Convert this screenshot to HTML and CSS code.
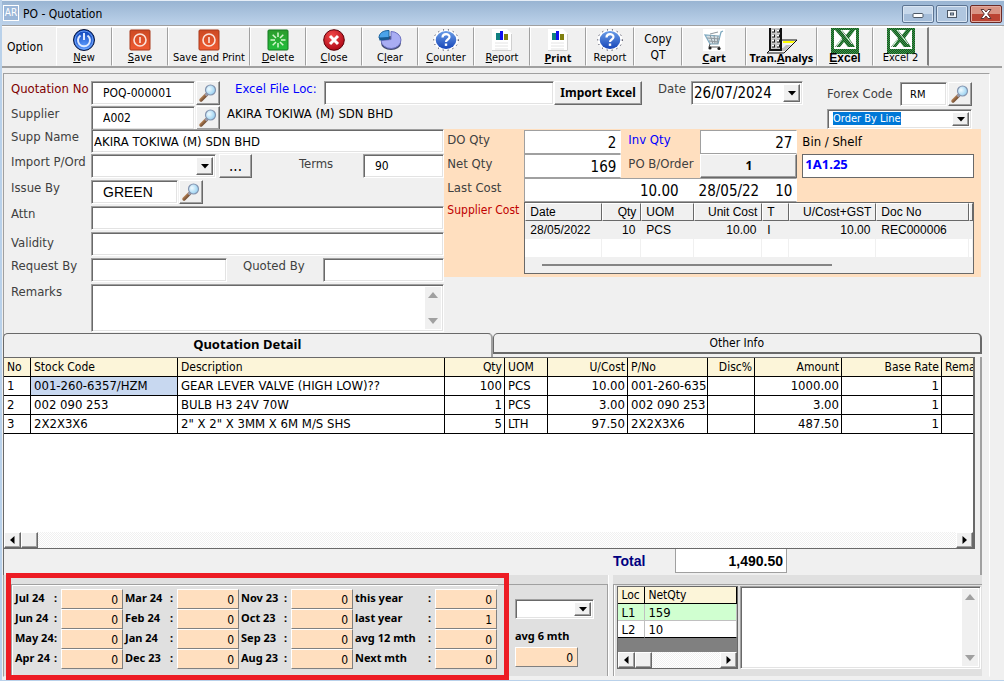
FILE: index.html
```html
<!DOCTYPE html>
<html lang="en">
<head>
<meta charset="utf-8">
<title>PO - Quotation</title>
<link rel="stylesheet" href="styles.css">
</head>
<body>
<svg class="sprite" aria-hidden="true">
  <defs>
    <linearGradient id="handle" x1="0" y1="0" x2="1" y2="1"><stop offset="0" stop-color="#e2a56c"/><stop offset="1" stop-color="#43281a"/></linearGradient>
    <radialGradient id="lens" cx=".35" cy=".4" r=".7"><stop offset="0" stop-color="#f2fbff"/><stop offset="1" stop-color="#8fcdf0"/></radialGradient>
    <radialGradient id="blue" cx=".5" cy=".8" r=".8"><stop offset="0" stop-color="#5c9bff"/><stop offset="1" stop-color="#0a3fb4"/></radialGradient>
    <linearGradient id="orange" x1="0" y1="0" x2="0" y2="1"><stop offset="0" stop-color="#cc4a24"/><stop offset="1" stop-color="#f05a32"/></linearGradient>
    <linearGradient id="green" x1="0" y1="0" x2="0" y2="1"><stop offset="0" stop-color="#2c9a2c"/><stop offset="1" stop-color="#22c03c"/></linearGradient>
    <radialGradient id="red" cx=".4" cy=".3" r=".8"><stop offset="0" stop-color="#f24a4a"/><stop offset="1" stop-color="#a80010"/></radialGradient>
    <linearGradient id="help" x1="0" y1="0" x2="0" y2="1"><stop offset="0" stop-color="#6a9de8"/><stop offset="1" stop-color="#1746b8"/></linearGradient>
    <pattern id="weave" width="2" height="2" patternUnits="userSpaceOnUse"><rect width="2" height="2" fill="#35a045"/><rect width="1" height="1" fill="#1c4a24"/><rect x="1" y="1" width="1" height="1" fill="#1c4a24"/></pattern>
  </defs>
  <symbol id="i-find" viewBox="0 0 20 20">
    <path d="M8.500 11.500L3 17" stroke="url(#handle)" stroke-width="3.500" stroke-linecap="round"/>
    <path d="M9.500 10.500L7.500 12.500" stroke="#9a9aa8" stroke-width="3"/>
    <circle cx="12.500" cy="7" r="5" fill="url(#lens)" stroke="#8595b0" stroke-width="1.200"/>
  </symbol>
  <symbol id="i-power" viewBox="0 0 22 22">
    <circle cx="11" cy="11" r="10.500" fill="url(#blue)" stroke="#08163c"/>
    <circle cx="11" cy="11" r="9" fill="none" stroke="#7fb0ff" stroke-width=".8"/>
    <path d="M7.500 6.500a6 6 0 1 0 7 0M11 4v7" fill="none" stroke="#dfeaff" stroke-width="2"/>
  </symbol>
  <symbol id="i-save" viewBox="0 0 22 22">
    <rect x="1" y="1" width="20" height="20" rx="1" fill="url(#orange)" stroke="#a93a1c"/>
    <circle cx="11" cy="11" r="6" fill="none" stroke="#fbe4dc" stroke-width="1.600"/>
    <path d="M11 8v6" stroke="#fbe4dc" stroke-width="1.600"/>
  </symbol>
  <symbol id="i-delete" viewBox="0 0 22 22">
    <rect x="1" y="1" width="20" height="20" rx="1" fill="url(#green)" stroke="#147a22"/>
    <path d="M11 3.500v4.500M11 14v4.500M3.500 11H8M14 11h4.500M5.700 5.700L9 9M13 13l3.300 3.300M5.700 16.300L9 13M13 9l3.300-3.300" stroke="#d6f7cf" stroke-width="1.500"/>
  </symbol>
  <symbol id="i-close" viewBox="0 0 22 22">
    <circle cx="11" cy="11" r="10.300" fill="url(#red)" stroke="#5d0008"/>
    <path d="M7 7l8 8M15 7l-8 8" stroke="#fff" stroke-width="3"/>
  </symbol>
  <symbol id="i-pie" viewBox="0 0 24 22">
    <ellipse cx="13" cy="14" rx="10" ry="7" fill="#40486e"/>
    <path d="M13 2.500a10 8.500 0 1 1-10 9l10-1z" fill="#a9adf3" stroke="#6b70c0"/>
    <path d="M1 9C1 4 5 1.500 11 1.500v7z" fill="#4aa3ea" stroke="#17609c"/>
    <path d="M1 9l10-.5v2L1.500 11.500z" fill="#155a92"/>
  </symbol>
  <symbol id="i-help" viewBox="0 0 26 22">
    <ellipse cx="13" cy="11" rx="12.300" ry="10.300" fill="#fff" stroke="#11112a" stroke-dasharray="1 4"/>
    <ellipse cx="13" cy="11" rx="10.300" ry="9" fill="url(#help)"/>
    <path d="M9.500 8.500C9.500 4 16.500 4 16.500 8c0 2.500-3.500 2.500-3.500 5" fill="none" stroke="#fff" stroke-width="2.200"/>
    <rect x="11.800" y="14.500" width="2.400" height="2.400" fill="#fff"/>
  </symbol>
  <symbol id="i-chart" viewBox="0 0 20 22">
    <path d="M0 0h15l5 5v17H0z" fill="#fff"/>
    <path d="M19.500 5v16.500H0" fill="none" stroke="#d0d0d0"/>
    <rect x="4" y="4" width="4" height="7" fill="#108080"/><rect x="8" y="2" width="3" height="9" fill="#1010f0"/><rect x="12" y="5" width="4" height="6" fill="#808010"/>
    <path d="M3 14h13M3 17h13M3 20h13" stroke="#e4e4e4"/>
  </symbol>
  <symbol id="i-cart" viewBox="0 0 22 22">
    <rect width="22" height="22" fill="#fff"/>
    <path d="M20 2l-2 1-3 12H7L2 6l14 1" fill="#d5e0e6" stroke="#7da9c0" stroke-width="1.200"/>
    <path d="M4 9l13 1M6 12l10 1M7 6l3 9M11 6l1 9M15 7l-1 8M7 5l8-2" stroke="#8f989e" stroke-width="1"/>
    <path d="M7 15l-1 3h11" fill="none" stroke="#555"/><circle cx="7" cy="19" r="1.600" fill="#222"/><circle cx="16" cy="19.500" r="1.600" fill="#222"/>
  </symbol>
  <symbol id="i-tower" viewBox="0 0 32 26">
    <path d="M14 12h17L18 25H1z" fill="#f2f2f2" stroke="#111"/>
    <path d="M17 13h12l-2 2H17z" fill="#ff0"/>
    <path d="M20 17h5l-6 6H6l3-3h8z" fill="#bcbcbc"/>
    <path d="M3 0h13v23H3z" fill="#111"/>
    <path d="M5 0h9v21H5z" fill="#c8c8c8"/>
    <path d="M6 3h3M11 3h3M6 8h3M11 8h3M6 13h3M11 13h3M6 18h3M11 18h3" stroke="#111" stroke-width="3"/>
    <path d="M6 2.500h2M11 2.500h2M6 7.500h2M11 7.500h2M6 12.500h2M11 12.500h2M6 17.500h2M11 17.500h2" stroke="#fff" stroke-width="2"/>
  </symbol>
  <symbol id="i-excel" viewBox="0 0 28 26">
    <rect width="28" height="26" fill="url(#weave)"/>
    <path d="M3 2h22v19H3z" fill="#fff"/>
    <path d="M4 2h7l4 5 4-5h5l-6 8 6 9h-7l-4-5-4 5H4l7-9z" fill="url(#weave)"/>
    <path d="M10 2l11 14M5 19l6-8" stroke="#fff" stroke-width="1"/>
  </symbol>
  <symbol id="i-down" viewBox="0 0 8 5"><path d="M0 0h8L4 4.500z"/></symbol>
  <symbol id="i-up" viewBox="0 0 10 6"><path d="M0 6h10L5 0z"/></symbol>
  <symbol id="i-flip" viewBox="0 0 10 6"><path d="M0 0h10L5 6z"/></symbol>
  <symbol id="i-left" viewBox="0 0 5 8"><path d="M4.500 0v8L0 4z"/></symbol>
  <symbol id="i-right" viewBox="0 0 5 8"><path d="M.5 0v8L5 4z"/></symbol>
</svg>

<div class="window">
  <header class="titlebar">
    <span class="app-icon" aria-hidden="true">AR</span>
    <h1>PO - Quotation</h1>
    <button class="win-btn" aria-label="Minimize"><svg width="12" height="12" viewBox="0 0 12 12"><rect x="1" y="5.500" width="10" height="4" rx="1" fill="#fff" stroke="#4d5866"/></svg></button>
    <button class="win-btn win-max" aria-label="Maximize"><svg width="12" height="12" viewBox="0 0 12 12"><rect x="1.500" y="2.500" width="9" height="7" fill="#f4f6f9" stroke="#4d5866"/><rect x="4.500" y="5" width="3" height="2" fill="#a9bdd6" stroke="#4d5866"/></svg></button>
    <button class="win-btn win-close" aria-label="Close window"><svg width="14" height="12" viewBox="0 0 14 12"><path d="M2 1.500h3l2 2.500 2-2.500h3L8.700 6l3.300 4.500H9L7 8l-2 2.500H2L5.300 6z" fill="#fff" stroke="#5a3434"/></svg></button>
  </header>

  <nav class="toolbar">
    <span class="tool-title">Option</span>
    <button class="tool"><svg width="22" height="22"><use href="#i-power"/></svg><span><u>N</u>ew</span></button>
    <button class="tool"><svg width="22" height="22"><use href="#i-save"/></svg><span><u>S</u>ave</span></button>
    <button class="tool tool-xl"><svg width="22" height="22"><use href="#i-save"/></svg><span>Save <u>a</u>nd Print</span></button>
    <button class="tool"><svg width="22" height="22"><use href="#i-delete"/></svg><span><u>D</u>elete</span></button>
    <button class="tool"><svg width="22" height="22"><use href="#i-close"/></svg><span><u>C</u>lose</span></button>
    <button class="tool"><svg width="24" height="22"><use href="#i-pie"/></svg><span>C<u>l</u>ear</span></button>
    <button class="tool"><svg width="26" height="22"><use href="#i-help"/></svg><span><u>C</u>ounter</span></button>
    <button class="tool"><svg width="20" height="22"><use href="#i-chart"/></svg><span><u>R</u>eport</span></button>
    <button class="tool strong"><svg width="20" height="22"><use href="#i-chart"/></svg><span><u>P</u>rint</span></button>
    <button class="tool tool-s"><svg width="26" height="22"><use href="#i-help"/></svg><span>Report</span></button>
    <button class="tool tool-s tool-text"><span>Copy<br>QT</span></button>
    <button class="tool tool-l strong"><svg width="22" height="22"><use href="#i-cart"/></svg><span><u>C</u>art</span></button>
    <button class="tool tool-l2 strong tool-tall"><svg width="32" height="26"><use href="#i-tower"/></svg><span>Tran.<u>A</u>nalys</span></button>
    <button class="tool strong tool-tall excel-font"><svg width="28" height="26"><use href="#i-excel"/></svg><span><u>E</u>xcel</span></button>
    <button class="tool tool-tall tool-last"><svg width="28" height="26"><use href="#i-excel"/></svg><span>Excel 2</span></button>
  </nav>

  <main class="panel">
    <form class="form">
      <div class="top">
        <div class="top-left">
          <div class="row">
            <label class="lab maroon" for="qno">Quotation No</label>
            <input class="box pad w-code" id="qno" value="POQ-000001">
            <button type="button" class="raised find" aria-label="Find quotation"><svg width="20" height="20"><use href="#i-find"/></svg></button>
            <label class="lab-excel" for="xfile">Excel File Loc:</label>
            <input class="box grow" id="xfile">
            <button type="button" class="raised import">Import Excel</button>
          </div>
          <div class="row">
            <label class="lab" for="supp">Supplier</label>
            <input class="box pad w-code" id="supp" value="A002">
            <button type="button" class="raised find" aria-label="Find supplier"><svg width="20" height="20"><use href="#i-find"/></svg></button>
            <span class="supp-title">AKIRA TOKIWA (M) SDN BHD</span>
          </div>
        </div>
        <div class="date-group">
          <label for="date">Date</label>
          <span class="combo combo-date"><input id="date" value="26/07/2024"><button type="button" class="raised drop" aria-label="Open calendar"><svg width="8" height="5"><use href="#i-down"/></svg></button></span>
        </div>
        <div class="forex-group">
          <div class="forex-row">
            <label for="forex">Forex Code</label>
            <input class="box forex" id="forex" value="RM">
            <button type="button" class="raised find" aria-label="Find currency"><svg width="20" height="20"><use href="#i-find"/></svg></button>
          </div>
          <span class="combo combo-order"><select class="picked" aria-label="Order"><option>Order By Line</option></select><span class="raised drop"><svg width="8" height="5"><use href="#i-down"/></svg></span></span>
        </div>
      </div>

      <div class="middle">
        <div class="fields">
          <div class="row"><label class="lab" for="sname">Supp Name</label><input class="box grow large" id="sname" value="AKIRA TOKIWA (M) SDN BHD"></div>
          <div class="row">
            <label class="lab" for="imp">Import P/Ord</label>
            <span class="combo combo-import"><select id="imp"><option></option></select><span class="raised drop"><svg width="8" height="5"><use href="#i-down"/></svg></span></span>
            <button type="button" class="raised more">...</button>
            <label class="lab-terms" for="terms">Terms</label>
            <input class="box pad grow" id="terms" value="90">
          </div>
          <div class="row"><label class="lab" for="issue">Issue By</label><input class="box pad issue" id="issue" value="GREEN"><button type="button" class="raised find" aria-label="Find user"><svg width="20" height="20"><use href="#i-find"/></svg></button></div>
          <div class="row"><label class="lab" for="attn">Attn</label><input class="box grow" id="attn"></div>
          <div class="row"><label class="lab low" for="valid">Validity</label><input class="box grow" id="valid"></div>
          <div class="row"><label class="lab" for="req">Request By</label><input class="box request" id="req"><label class="lab-quoted" for="quoted">Quoted By</label><input class="box grow" id="quoted"></div>
          <div class="row"><label class="lab" for="remarks">Remarks</label>
            <div class="box memo grow"><textarea id="remarks"></textarea><span class="memo-bar"><svg width="10" height="6"><use href="#i-up"/></svg><svg width="10" height="6"><use href="#i-flip"/></svg></span></div>
          </div>
        </div>

        <section class="cost">
          <div class="cost-grid">
            <label for="doq">DO Qty</label><input class="flat" id="doq" value="2">
            <label class="blue inset" for="invq">Inv Qty</label><input class="flat" id="invq" value="27">
            <label class="black inset-s" for="bin">Bin / Shelf</label>
            <label for="netq">Net Qty</label><input class="flat" id="netq" value="169">
            <span class="inset">PO B/Order</span><button type="button" class="raised border-btn">1</button>
            <input class="bin" id="bin" value="1A1.25">
            <span>Last Cost</span>
            <output class="flat last"><span>10.00</span><span>28/05/22</span><span>10</span></output>
          </div>
          <div class="cost-list">
            <span class="red">Supplier Cost</span>
            <div class="cost-box">
              <table class="cost-table">
                <colgroup><col class="k1"><col class="k2"><col class="k3"><col class="k4"><col class="k5"><col class="k6"><col class="k7"><col></colgroup>
                <thead><tr><th>Date</th><th class="num">Qty</th><th>UOM</th><th class="num">Unit Cost</th><th>T</th><th class="num">U/Cost+GST</th><th>Doc No</th><th></th></tr></thead>
                <tbody>
                  <tr><td>28/05/2022</td><td class="num">10</td><td>PCS</td><td class="num">10.00</td><td>I</td><td class="num">10.00</td><td>REC000006</td><td></td></tr>
                  <tr><td></td><td></td><td></td><td></td><td></td><td></td><td></td><td></td></tr>
                </tbody>
              </table>
              <div class="thin-bar"><i></i></div>
            </div>
          </div>
        </section>
      </div>
    </form>

    <section class="tabs">
      <div class="tab-row">
        <button class="tab active">Quotation Detail</button>
        <button class="tab">Other Info</button>
      </div>
      <div class="sheet">
        <div class="grid-box">
          <div class="grid-clip">
          <table class="detail">
            <colgroup><col class="c1"><col class="c2"><col class="c3"><col class="c4"><col class="c5"><col class="c6"><col class="c7"><col class="c8"><col class="c9"><col class="c10"><col></colgroup>
            <thead><tr><th>No</th><th>Stock Code</th><th>Description</th><th class="num">Qty</th><th>UOM</th><th class="num">U/Cost</th><th>P/No</th><th class="num">Disc%</th><th class="num">Amount</th><th class="num">Base Rate</th><th>Rema</th></tr></thead>
            <tbody>
              <tr><td>1</td><td class="cell-on">001-260-6357/HZM</td><td>GEAR LEVER VALVE (HIGH LOW)??</td><td class="num">100</td><td>PCS</td><td class="num">10.00</td><td>001-260-635</td><td></td><td class="num">1000.00</td><td class="num">1</td><td></td></tr>
              <tr><td>2</td><td>002 090 253</td><td>BULB H3 24V 70W</td><td class="num">1</td><td>PCS</td><td class="num">3.00</td><td>002 090 253</td><td></td><td class="num">3.00</td><td class="num">1</td><td></td></tr>
              <tr><td>3</td><td>2X2X3X6</td><td>2" X 2" X 3MM X 6M M/S SHS</td><td class="num">5</td><td>LTH</td><td class="num">97.50</td><td>2X2X3X6</td><td></td><td class="num">487.50</td><td class="num">1</td><td></td></tr>
            </tbody>
          </table>
          </div>
          <div class="hbar"><button class="raised" aria-label="Scroll left"><svg width="5" height="8"><use href="#i-left"/></svg></button><span class="raised thumb"></span><button class="raised end" aria-label="Scroll right"><svg width="5" height="8"><use href="#i-right"/></svg></button></div>
        </div>
        <div class="total"><label for="total">Total</label><input id="total" value="1,490.50" readonly></div>
      </div>
    </section>

    <section class="bottom">
      <div class="group stats">
        <div class="months">
          <div class="highlight"></div>
          <label for="m1"><b>Jul 24</b><b>:</b></label><output class="peach" id="m1">0</output>
          <label for="m5"><b>Mar 24</b><b>:</b></label><output class="peach" id="m5">0</output>
          <label for="m9"><b>Nov 23</b><b>:</b></label><output class="peach" id="m9">0</output>
          <label for="y1"><b>this year</b><b>:</b></label><output class="peach" id="y1">0</output>
          <label for="m2"><b>Jun 24</b><b>:</b></label><output class="peach" id="m2">0</output>
          <label for="m6"><b>Feb 24</b><b>:</b></label><output class="peach" id="m6">0</output>
          <label for="m10"><b>Oct 23</b><b>:</b></label><output class="peach" id="m10">0</output>
          <label for="y2"><b>last year</b><b>:</b></label><output class="peach" id="y2">1</output>
          <label for="m3"><b>May 24</b><b>:</b></label><output class="peach" id="m3">0</output>
          <label for="m7"><b>Jan 24</b><b>:</b></label><output class="peach" id="m7">0</output>
          <label for="m11"><b>Sep 23</b><b>:</b></label><output class="peach" id="m11">0</output>
          <label for="y3"><b>avg 12 mth</b><b>:</b></label><output class="peach" id="y3">0</output>
          <label for="m4"><b>Apr 24</b><b>:</b></label><output class="peach" id="m4">0</output>
          <label for="m8"><b>Dec 23</b><b>:</b></label><output class="peach" id="m8">0</output>
          <label for="m12"><b>Aug 23</b><b>:</b></label><output class="peach" id="m12">0</output>
          <label for="y4"><b>Next mth</b><b>:</b></label><output class="peach" id="y4">0</output>
        </div>
        <div class="average">
          <span class="combo combo-avg"><select aria-label="Location"><option></option></select><span class="raised drop"><svg width="8" height="5"><use href="#i-down"/></svg></span></span>
          <label for="avg6">avg 6 mth</label>
          <output class="peach" id="avg6">0</output>
        </div>
      </div>
      <div class="group stock">
        <div class="well">
          <div class="loc-box">
            <table class="loc">
              <thead><tr><th>Loc</th><th>NetQty</th></tr></thead>
              <tbody><tr class="loc-on"><td>L1</td><td>159</td></tr><tr><td>L2</td><td>10</td></tr></tbody>
            </table>
            <div class="hbar"><button class="raised" aria-label="Scroll left"><svg width="5" height="8"><use href="#i-left"/></svg></button><span class="raised thumb"></span><button class="raised end" aria-label="Scroll right"><svg width="5" height="8"><use href="#i-right"/></svg></button></div>
          </div>
          <div class="box memo grow"><textarea aria-label="Notes"></textarea><span class="memo-bar"><svg width="10" height="6"><use href="#i-up"/></svg><svg width="10" height="6"><use href="#i-flip"/></svg></span></div>
        </div>
      </div>
    </section>
  </main>
</div>
</body>
</html>
```

FILE: styles.css
```css
* { box-sizing: border-box; }
html, body { margin: 0; }
body {
  background: #f0f0f0;
  color: #000;
  font: 12px/16px "DejaVu Sans Condensed", "Noto Sans", sans-serif;
}
button, input, select, textarea { font: inherit; color: inherit; margin: 0; padding: 0; border-radius: 0; }
input, textarea { outline: 0; min-width: 0; }
svg { display: block; flex: none; }
.sprite { position: absolute; width: 0; height: 0; }
.window {
  min-height: 100vh;
  display: flex;
  flex-direction: column;
  border-left: 2px solid #b9d1ea;
  border-bottom: 1px solid #b9d1ea;
}

/* title bar */
.titlebar {
  height: 26px;
  display: flex;
  align-items: flex-start;
  gap: 2px;
  padding: 4px 2px 0 1px;
  background: linear-gradient(#98b4d2, #bcd2ea);
  border-top: 1px solid #e6eef7;
  border-bottom: 1px solid #a0a0a0;
}
.app-icon { width: 16px; height: 16px; border: 1px solid #fff; color: #fff; font-size: 10px; line-height: 14px; text-align: center; background: #9ab6d8; }
.titlebar h1 { margin: 0 auto 0 2px; font-size: 12px; line-height: 18px; font-weight: 400; }
.win-btn { width: 32px; height: 18px; display: flex; align-items: center; justify-content: center; border: 1px solid #5c7492; border-radius: 2px; background: linear-gradient(#c6d7ea 50%, #a5bdd9 50%); box-shadow: inset 0 0 0 1px #d9e5f2; }
.win-max { background: #b0c6df; }
.win-close { background: linear-gradient(#d99484 50%, #bb4433 50%); border-color: #6b2a26; box-shadow: inset 0 0 0 1px #e3aba0; }

/* toolbar */
.toolbar { display: flex; height: 42px; border-top: 1px solid #fff; border-bottom: 2px solid #a0a0a0; margin-right: 2px; }
.tool-title { flex: 0 1 54px; padding: 12px 0 0 5px; }
.tool {
  flex: 0 1 56px;
  display: flex;
  flex-direction: column;
  align-items: center;
  justify-content: flex-end;
  border: 1px solid;
  border-color: #fff #a0a0a0 #f0f0f0 #fff;
  background: #f0f0f0;
  font-size: 11px;
  white-space: nowrap;
}
.tool span { line-height: 14px; }
.tool-xl { flex-basis: 82px; }
.tool-s { flex-basis: 48px; }
.tool-l { flex-basis: 64px; }
.tool-l2 { flex-basis: 71px; }
.tool-tall svg { margin-bottom: -3px; }
.tool-last { border-right: 2px solid #808080; }
.tool-tall span { position: relative; }
.tool-text { justify-content: center; font-size: 12px; }
.tool-text span { line-height: 16px; }
.strong { font-family: "Noto Sans", sans-serif; font-weight: 700; }
.excel-font { font-family: "Liberation Sans", sans-serif; font-size: 12px; }

/* shared controls */
.box {
  height: 24px;
  border: 1px solid;
  border-color: #a0a0a0 #fff #fff #a0a0a0;
  box-shadow: inset 1px 1px #696969, inset -1px -1px #e3e3e3;
  background: #fff;
  padding: 2px;
}
.pad { padding-left: 11px; }
.grow { flex: 1 1 0; }
.large { font-size: 13px; }
.raised {
  display: flex;
  align-items: center;
  justify-content: center;
  background: #f0f0f0;
  border: 1px solid;
  border-color: #fff #696969 #696969 #fff;
  box-shadow: inset -1px -1px #a0a0a0;
}
.find { width: 24px; height: 24px; flex: none; margin-left: 1px; }
.combo { display: flex; flex: none; height: 24px; border: 1px solid; border-color: #a0a0a0 #fff #fff #a0a0a0; box-shadow: inset 1px 1px #696969, inset -1px -1px #e3e3e3; padding: 2px; background: #fff; }
.combo input, .combo select { flex: 1; width: 0; border: 0; background: transparent; appearance: none; outline: 0; }
.drop { width: 17px; flex: none; pointer-events: none; }
.memo { height: auto; min-height: 48px; display: flex; padding: 2px; }
.memo textarea { flex: 1; width: 0; border: 0; resize: none; background: transparent; }
.memo-bar { width: 16px; background: #f0f0f0; display: flex; flex-direction: column; align-items: center; justify-content: space-between; padding: 5px 0; fill: #a0a0a0; }

/* form */
.panel { flex: 1; display: flex; flex-direction: column; margin: 5px 14px 3px 1px; border: 1px solid; border-color: #a0a0a0 #fff transparent #a0a0a0; }
.form { color: #404040; padding: 7px 0 0; }
.form input { color: #000; }
.row { display: flex; align-items: flex-start; }
.lab { flex: none; width: 87px; padding-left: 7px; font-size: 13px; white-space: nowrap; }
.maroon { color: #800000; }
.top { display: flex; height: 48px; }
.top-left { flex: 1; display: flex; flex-direction: column; gap: 1px; }
.w-code { width: 104px; }
.lab-excel { width: 104px; padding-left: 15px; font-size: 13px; color: #0000ff; white-space: nowrap; }
.import { width: 88px; height: 24px; color: #000; font-family: "Noto Sans", sans-serif; font-weight: 700; }
.supp-title { padding-left: 7px; color: #000; font-size: 13px; }
.date-group { display: flex; gap: 5px; margin-left: 16px; font-size: 13px; }
.combo-date { width: 112px; font-size: 15px; }
.forex-group { width: 145px; margin: 1px 17px 0 24px; display: flex; flex-direction: column; gap: 3px; font-size: 13px; }
.forex-row { display: flex; align-items: center; white-space: nowrap; height: 24px; }
.forex-row label { flex: 1; }
.forex { width: 47px; padding-left: 9px; font-size: 11px; }
.combo-order { height: 20px; font-size: 11px; }
.combo .picked { color: #fff; background: linear-gradient(#0078d7, #0078d7) 3px 0 / 68px 13px no-repeat; padding-left: 3px; line-height: 14px; }

.middle { display: flex; }
.fields { flex: 444 1 0; min-width: 0; display: flex; flex-direction: column; gap: 1px; }
.fields .row:nth-child(n+3) { margin-top: 1px; }
.combo-import { width: 125px; }
.more { width: 33px; height: 24px; margin-left: 3px; font-size: 15px; color: #000; }
.lab-terms { width: 111px; padding-left: 47px; font-size: 13px; padding-top: 2px; }
.issue { width: 87px; font: 14px "Liberation Sans", sans-serif; }
.low { padding-top: 3px; }
.request { width: 136px; }
.lab-quoted { width: 96px; padding-left: 16px; font-size: 13px; }

/* cost panel */
.cost { flex: 531 1 0; min-width: 0; align-self: flex-start; margin-right: 8px; background: #ffdfbf; padding: 1px 7px 3px 3px; font-size: 13px; }
.cost-grid { display: grid; grid-template-columns: 77px 97px 79px 97px 1fr; grid-auto-rows: 24px; }
.cost-grid > label, .cost-grid > span { padding-top: 2px; }
.inset { padding-left: 7px; white-space: nowrap; }
.inset-s { padding-left: 5px; }
.cost-grid .inset-s { padding-top: 4px; }
.blue { color: #0000ff; }
.black { color: #000; }
.red { color: #c00000; white-space: nowrap; font-size: 12px; }
.flat { border: 1px solid #a0a0a0; border-right-color: #fff; background: #fff; text-align: right; font-size: 15px; padding: 2px 4px 0; height: 24px; color: #000; }
.border-btn { color: #000; font-family: "Noto Sans", sans-serif; font-weight: 700; font-size: 12px; }
.bin { margin-left: 5px; border: 1px solid #696969; padding: 0 2px 4px; font-family: "Noto Sans", sans-serif; font-weight: 700; }
.form .bin { color: #0000ff; }
.last { grid-column: span 3; display: flex; justify-content: flex-end; gap: 16px; line-height: 20px; }
.last span:nth-child(2) { padding-left: 4px; }
.cost-list { display: flex; }
.cost-list > .red { width: 77px; }
.cost-box { flex: 1; min-width: 0; border: 1px solid #696969; background: #fff; color: #000; }
table { border-collapse: separate; border-spacing: 0; table-layout: fixed; width: 100%; }
th { font-weight: 400; text-align: left; }
th, td { padding: 0; white-space: nowrap; overflow: hidden; }
.num { text-align: right; }
.cost-table { font: 12px/16px "Liberation Sans", sans-serif; }
.cost-table th { height: 18px; background: #f0f0f0; border: 1px solid; border-color: #fff #696969 #696969 #fff; padding: 0 4px; }
.cost-table td { height: 18px; padding: 0 5px; border-right: 1px solid #f0f0f0; }
.cost-table tbody tr:first-child { background: #f0f0f0; }
.k1 { width: 77px; } .k2 { width: 39px; } .k3 { width: 53px; } .k4 { width: 68px; } .k5 { width: 27px; } .k6 { width: 87px; } .k7 { width: 93px; }
.thin-bar { height: 16px; background: #f0f0f0; display: flex; align-items: center; padding: 0 17px; }
.thin-bar i { width: 70%; height: 2px; background: #858585; }

/* tabs */
.tabs { flex: 1; display: flex; flex-direction: column; margin: 1px 7px 0 -1px; }
.tab-row { display: flex; height: 24px; }
.tab { flex: 1; height: 21px; border: solid #696969; border-width: 1px 2px 2px 1px; border-radius: 5px 5px 0 0; background: #f0f0f0; }
.tab.active { height: 24px; padding-bottom: 3px; border-bottom: 0; border-right-color: #a0a0a0; font: 700 13px/16px "Noto Sans", sans-serif; }
.sheet { flex: 1; display: flex; flex-direction: column; border-left: 1px solid #696969; border-right: 2px solid #a0a0a0; padding-right: 5px; }
.grid-box { flex: 1; display: flex; flex-direction: column; border: solid #696969; border-width: 1px 2px 1px 0; background: #fff; }
.grid-clip { flex: 1; overflow: hidden; }
.detail { font-size: 13px; }
.detail th, .detail td { height: 19px; border-right: 1px solid #000; border-bottom: 1px solid #000; padding: 0 3px; line-height: 16px; }
.detail th { background: #fcf5d9; font-size: 12px; }
.detail .num { padding: 0 2px; }
.detail .cell-on { background: #c8d8f0; }
.detail th:last-child, .detail td:last-child { border-right: 0; padding-right: 0; }
.c1 { width: 27px; } .c2 { width: 147px; } .c3 { width: 267px; } .c4 { width: 60px; } .c5 { width: 43px; } .c6 { width: 80px; } .c7 { width: 80px; } .c8 { width: 47px; } .c9 { width: 87px; } .c10 { width: 100px; }
.hbar { display: flex; height: 16px; background: repeating-conic-gradient(#fff 0 25%, #f0f0f0 0 50%) 0 0 / 2px 2px; }
.hbar .raised { width: 17px; flex: none; }
.hbar .end { margin-left: auto; }
.total { display: flex; align-items: flex-start; justify-content: flex-end; height: 26px; padding-right: 188px; font: 700 14px/16px "Liberation Sans", sans-serif; }
.total label { color: #000080; width: 62px; padding-top: 4px; }
.total input { width: 112px; height: 24px; border: 1px solid #a0a0a0; border-top: 0; background: #fff; text-align: right; padding-right: 3px; }

/* bottom groups */
.bottom { display: flex; gap: 4px; margin-right: 7px; font-size: 12px; }
.group { min-width: 0; background: #e0e0e0; padding-top: 9px; display: flex; }
.stats { flex: 605 1 0; border-right: 1px solid #fff; }
.months {
  position: relative;
  display: grid;
  grid-template-columns: 47px 63px 53px 63px 51px 63px 81px 63px;
  grid-auto-rows: 20px;
  margin-left: 7px;
  padding: 4px 0 7px 2px;
  border-top: 1px solid #a0a0a0;
  border-left: 1px solid #a0a0a0;
  box-shadow: inset 1px 1px #fff;
}
.highlight { position: absolute; inset: -12px -11px -4px -6px; border: 5px solid #ed1c24; }
.months label { display: flex; min-width: 0; justify-content: space-between; padding: 1px 4px 0 1px; white-space: nowrap; }
.months b, .average label { font-family: "Noto Sans", sans-serif; font-size: 11px; font-weight: 700; }
.peach { background: #ffdfbf; border: 1px solid; border-color: #fff #808080 #808080 #fff; padding: 2px 4px 0; height: 20px; line-height: 16px; text-align: right; }
.months .peach { margin-right: 1px; }
.average { flex: 1; border-top: 1px solid #a0a0a0; border-right: 1px solid #a0a0a0; padding: 14px 13px 0 17px; display: flex; flex-direction: column; }
.combo-avg { height: 20px; }
.average label { padding: 9px 0 3px; line-height: 16px; }
.average .peach { width: 63px; }
.stock { flex: 369 1 0; }
.well { flex: 1; display: flex; gap: 2px; padding: 1px 1px 7px 3px; border: 1px solid #a0a0a0; border-width: 1px 0 0 1px; box-shadow: inset 1px 0 #fff; }
.loc-box { width: 121px; border: 1px solid #696969; background: #808080; display: flex; flex-direction: column; }
.loc-box .hbar { margin-top: auto; }
.loc th, .loc td { height: 17px; padding: 0 3px; border-right: 1px solid #c0c0c0; border-bottom: 1px solid #c0c0c0; background: #fff; line-height: 15px; font-size: 13px; }
.loc th { background: #fcf5d9; border-color: #000; font-size: 12px; }
.loc th:first-child { width: 27px; }
.loc .loc-on td { background: #d0ffd0; }
.loc tr:last-child td { border-bottom-color: #000; }
```
